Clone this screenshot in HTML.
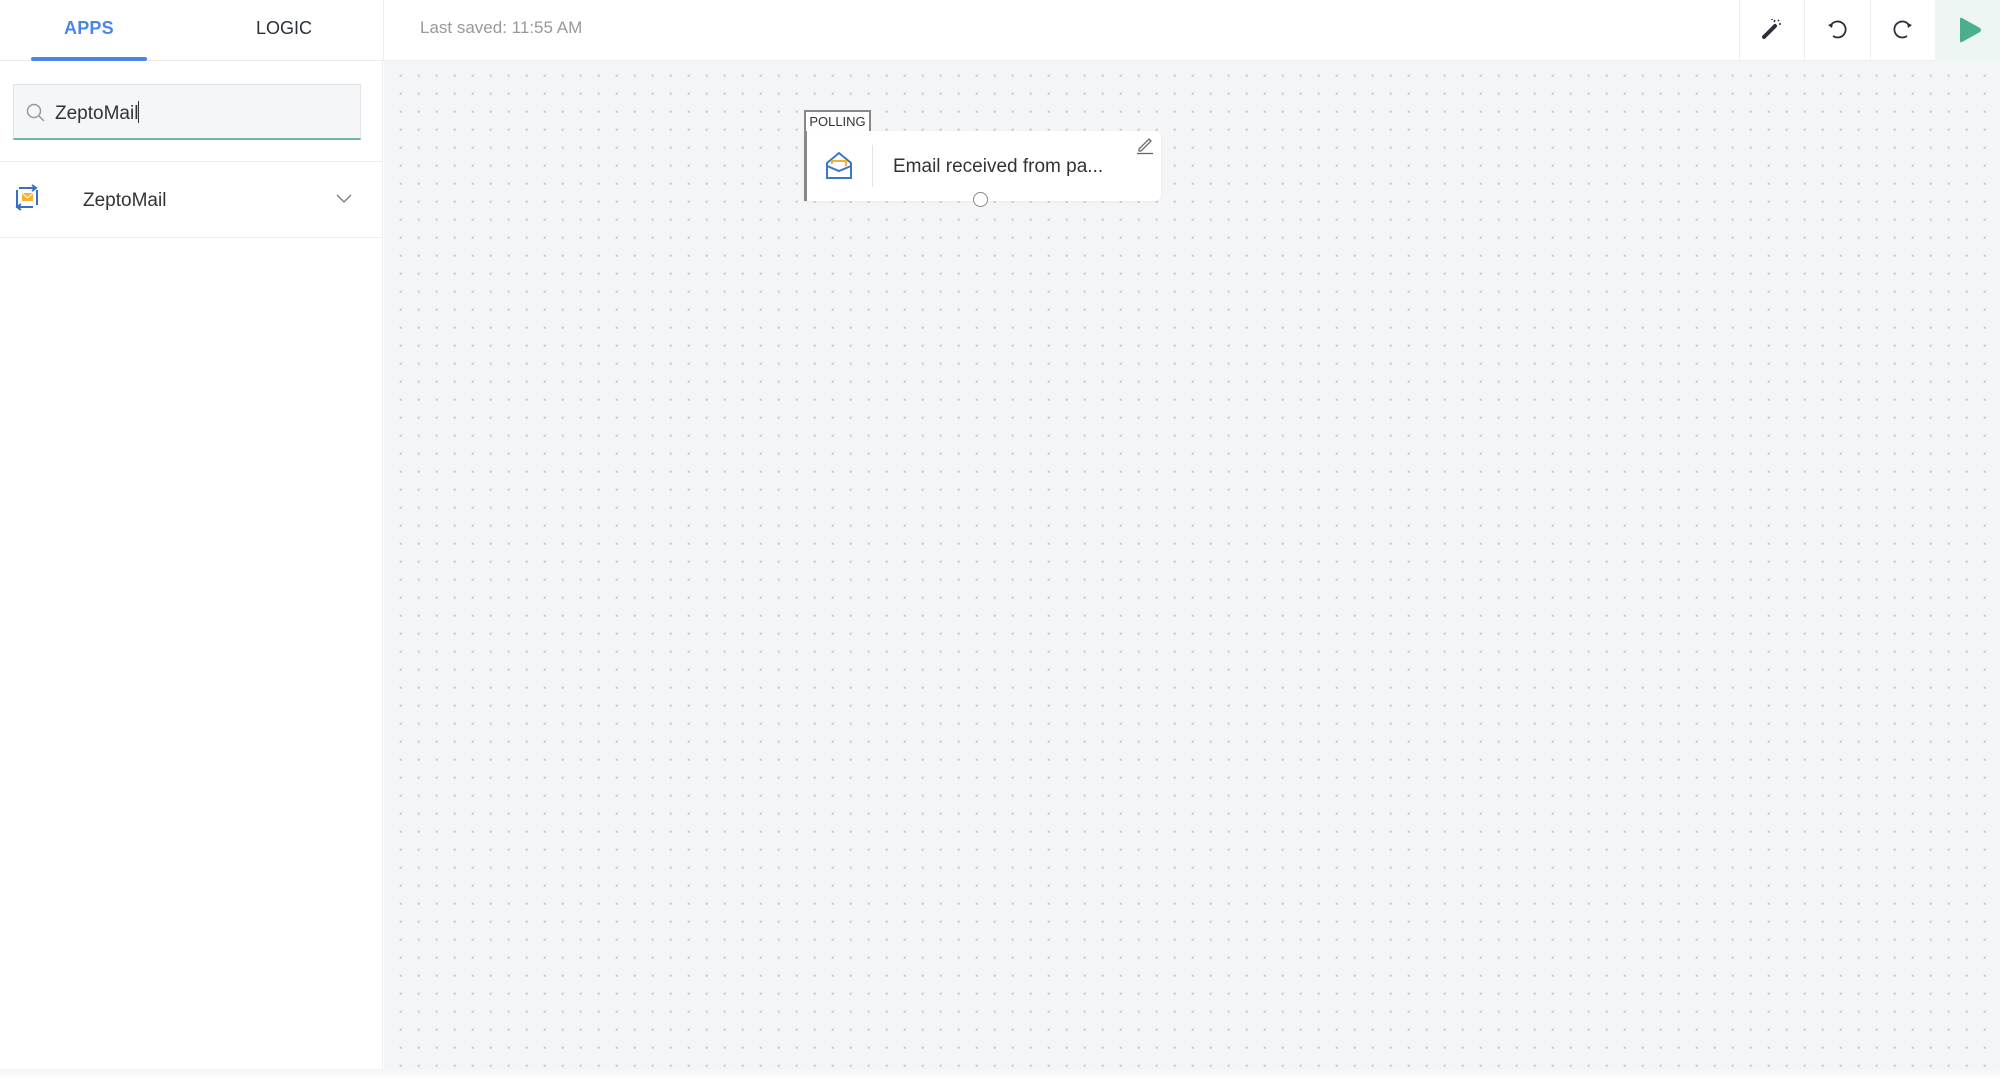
<!DOCTYPE html>
<html><head><meta charset="utf-8"><style>
*{margin:0;padding:0;box-sizing:border-box}
body{width:2000px;height:1078px;overflow:hidden;background:#fff;font-family:"Liberation Sans",sans-serif;position:relative}
.hdr{position:absolute;left:0;top:0;width:2000px;height:61px;background:#fff;border-bottom:1px solid #ececef;z-index:2}
.side{position:absolute;left:0;top:61px;width:383px;height:1008px;background:#fff;border-right:1px solid #eceef1}
.canvas{position:absolute;left:384px;top:61px;width:1616px;height:1008px;background-color:#f4f5f7;
background-image:radial-gradient(circle,#c4c5cb 1px,transparent 1.3px);background-size:18px 18px;background-position:7.7px 5.7px}
.bot{position:absolute;left:0;top:1069px;width:2000px;height:9px;background:linear-gradient(#f4f4f4,#fff)}
.t{position:absolute;font-size:18px}
</style></head><body>
<div class="hdr">
 <div class="t" style="left:64px;top:18px;color:#4a86e8;font-weight:bold;letter-spacing:.2px">APPS</div>
 <div style="position:absolute;left:31px;top:57px;width:116px;height:4px;border-radius:2px;background:#4a86e8"></div>
 <div class="t" style="left:256px;top:18px;color:#2b2f3a">LOGIC</div>
 <div style="position:absolute;left:383px;top:0;width:1px;height:61px;background:#eceef1"></div>
 <div class="t" style="left:420px;top:18px;color:#999;font-size:17px">Last saved: 11:55 AM</div>
 <div style="position:absolute;left:1739px;top:0;width:1px;height:61px;background:#eee"></div>
 <div style="position:absolute;left:1804px;top:0;width:1px;height:61px;background:#eee"></div>
 <div style="position:absolute;left:1870px;top:0;width:1px;height:61px;background:#eee"></div>
 <div style="position:absolute;left:1935px;top:0;width:65px;height:61px;background:#edf6f2"></div>
 <svg style="position:absolute;left:1760px;top:16px" width="24" height="24" viewBox="0 0 24 24"><path d="M4 21 L15 10" stroke="#2b2f3a" stroke-width="4" stroke-linecap="round"/><path d="M14 6l1-2M18 4l1 1M19 8l2 0M12 4l0-1" stroke="#2b2f3a" stroke-width="1.5"/></svg>
 <svg style="position:absolute;left:1824px;top:16px" width="26" height="26" viewBox="0 0 26 26"><path d="M7 9 A8 8 0 1 1 9 20" fill="none" stroke="#2b2f3a" stroke-width="1.8"/><path d="M4 9 L8 12 L9 7 Z" fill="#2b2f3a"/></svg>
 <svg style="position:absolute;left:1890px;top:16px" width="26" height="26" viewBox="0 0 26 26"><path d="M19 9 A8 8 0 1 0 17 20" fill="none" stroke="#2b2f3a" stroke-width="1.8"/><path d="M22 9 L18 12 L17 7 Z" fill="#2b2f3a"/></svg>
 <svg style="position:absolute;left:1957px;top:16px" width="26" height="28" viewBox="0 0 26 28"><path d="M3 3 Q3 1 5 2 L23 12 Q25 14 23 16 L5 26 Q3 27 3 25 Z" fill="#4caf8c"/></svg>
</div>
<div class="side">
 <div style="position:absolute;left:13px;top:23px;width:348px;height:56px;background:#f5f6f8;border:1px solid #e2e4e8;border-bottom:2px solid #6fb5aa"></div>
 <svg style="position:absolute;left:26px;top:42px" width="20" height="20" viewBox="0 0 20 20"><circle cx="8" cy="8" r="6.5" fill="none" stroke="#999" stroke-width="1.5"/><path d="M13 13 L18 18" stroke="#999" stroke-width="1.5"/></svg>
 <div class="t" style="left:55px;top:40px;font-size:19px;color:#333">ZeptoMail<span style="display:inline-block;width:1px;height:22px;background:#333;vertical-align:-4px"></span></div>
 <div style="position:absolute;left:0;top:100px;width:383px;height:1px;background:#eee"></div>
 <svg style="position:absolute;left:13px;top:122px" width="30" height="30" viewBox="0 0 30 30"><path d="M6 5 H22 M19 2 L23 5 L19 8" fill="none" stroke="#3b6fc4" stroke-width="2"/><path d="M4 7 V24 H20 M24 7 V22 M8 27 L4 24 L8 21" fill="none" stroke="#3b6fc4" stroke-width="2"/><rect x="9" y="10" width="11" height="8" fill="#f2b233"/><path d="M9 10 L14.5 15 L20 10" fill="none" stroke="#fff" stroke-width="1"/></svg>
 <div class="t" style="left:83px;top:129px;font-size:19px;color:#333">ZeptoMail</div>
 <svg style="position:absolute;left:336px;top:133px" width="16" height="10" viewBox="0 0 16 10"><path d="M1 1 L8 8 L15 1" fill="none" stroke="#777" stroke-width="1.3"/></svg>
 <div style="position:absolute;left:0;top:176px;width:383px;height:1px;background:#eee"></div>
</div>
<div class="canvas">
 <div style="position:absolute;left:420px;top:49px;width:67px;height:22px;background:#fff;border:2px solid #888;border-bottom:none;font-size:13px;color:#333;text-align:center;line-height:20px">POLLING</div>
 <div style="position:absolute;left:420px;top:70px;width:357px;height:70px;background:#fff;border-left:3px solid #888;border-radius:0 6px 6px 0;box-shadow:0 1px 3px rgba(0,0,0,.05)">
  <svg style="position:absolute;left:17px;top:20px" width="30" height="30" viewBox="0 0 30 30"><path d="M3 12 L15 2 L27 12 V27 H3 Z" fill="none" stroke="#3b76c8" stroke-width="2"/><path d="M3 27 L3 15 L15 20 L27 15" fill="none" stroke="#3b76c8" stroke-width="2"/><path d="M8 13 V10 H22 V15" fill="none" stroke="#f2b233" stroke-width="2"/></svg>
  <div style="position:absolute;left:65px;top:14px;width:1px;height:42px;background:#e5e5e5"></div>
  <div style="position:absolute;left:86px;top:25px;font-size:19px;color:#333">Email received from pa...</div>
  <svg style="position:absolute;left:328px;top:4px" width="20" height="20" viewBox="0 0 20 20"><path d="M4 14 L14 4 L16 6 L6 16 L4 16 Z" fill="none" stroke="#666" stroke-width="1.3"/><path d="M2 18.5 H18" stroke="#666" stroke-width="1.3"/></svg>
 </div>
 <div style="position:absolute;left:589px;top:131px;width:15px;height:15px;border-radius:50%;background:#fff;border:1.5px solid #888"></div>
</div>
<div class="bot"></div>
</body></html>
